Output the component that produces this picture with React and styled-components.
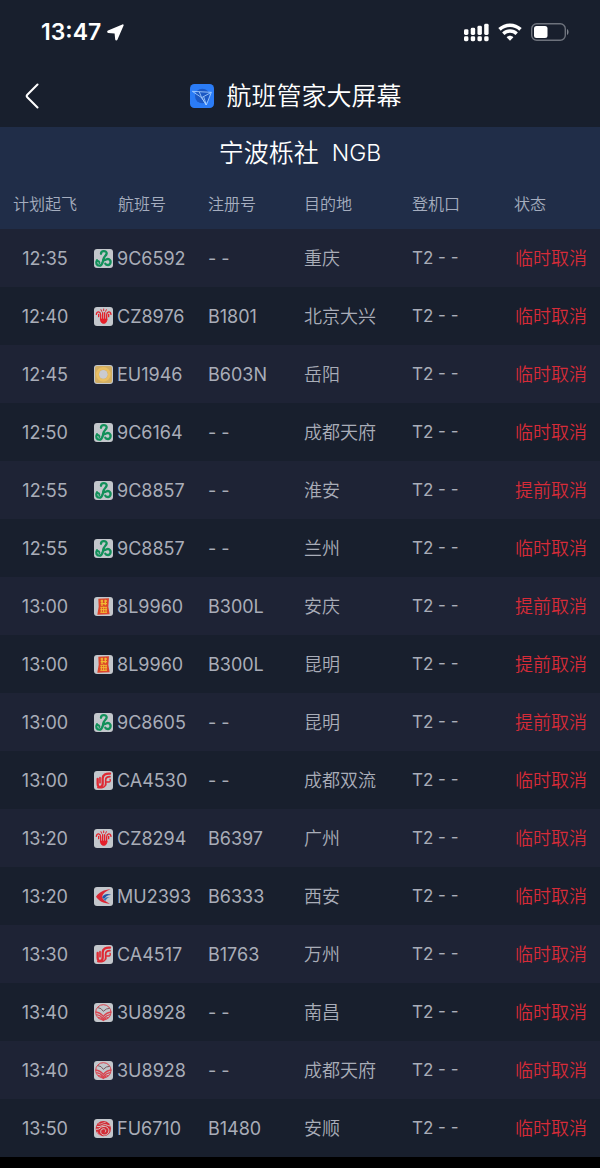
import styled, { createGlobalStyle } from "styled-components";

const GlobalStyle = createGlobalStyle`
  * {
    box-sizing: border-box;
  }
  body {
    margin: 0;
    background-color: #000;
    color: #fff;
    font-family: Inter, "Noto Sans CJK SC", sans-serif;
  }
`;

const Screen = styled.main`
  width: 100%;
  background-color: #181f2d;
`;

const StatusBar = styled.div`
  height: 64px;
  padding: 0 31px 0 41px;
  display: flex;
  align-items: center;
  justify-content: space-between;
`;

const Clock = styled.div`
  display: flex;
  align-items: center;
  gap: 6px;
  font-size: 23px;
  font-weight: 600;
  line-height: 28px;
`;

const Indicators = styled.div`
  display: flex;
  align-items: center;
  gap: 9px;
`;

const NavBar = styled.header`
  height: 63px;
  padding: 0 16px;
  display: grid;
  grid-template-columns: 32px 1fr 32px;
  align-items: center;
`;

const BackButton = styled.button`
  height: 40px;
  padding: 0;
  border: none;
  background: none;
  color: #fff;
  display: flex;
  align-items: center;
  justify-content: center;
  cursor: pointer;
`;

const Title = styled.h1`
  margin: 0;
  display: flex;
  align-items: center;
  justify-content: center;
  gap: 12px;
  font-size: 25px;
  font-weight: 350;
  line-height: 32px;
  padding-right: 8px;
`;

const Airport = styled.h2`
  margin: 0;
  height: 51px;
  background-color: #202d48;
  display: flex;
  align-items: center;
  justify-content: center;
  gap: 13px;
  font-size: 25px;
  font-weight: 350;
  line-height: 32px;

  span {
    font-size: 23px;
  }
`;

const Table = styled.table`
  width: 100%;
  table-layout: fixed;
  border-collapse: collapse;
  color: #a9adb8;

  th,
  td {
    padding: 0 0 0 4px;
    text-align: left;
    font-weight: 400;
    white-space: nowrap;
  }
  th {
    height: 51px;
    padding-bottom: 2px;
    font-size: 16px;
    font-weight: 350;
    background-color: #202d48;
    color: #a5adbf;
  }
  th:first-child,
  td:first-child {
    padding-left: 0;
    text-align: center;
  }
  th:nth-child(2) {
    padding-left: 28px;
  }
  td {
    height: 58px;
    font-size: 18px;
  }
  tbody tr:nth-child(odd) {
    background-color: #1e2335;
  }
`;

const Col = styled.col`
  width: ${(props) => props.$width};
`;

const Flight = styled.div`
  display: flex;
  align-items: center;
  gap: 4px;
`;

const Badge = styled.svg`
  width: 19px;
  height: 19px;
  border-radius: 3px;
  background-color: #c3c7cc;
  flex: none;
`;

const Destination = styled.td`
  && {
    font-weight: 350;
    padding-bottom: 2px;
  }
`;

const Gate = styled.td`
  && {
    font-size: 17px;
  }
`;

const State = styled.td`
  && {
    font-weight: 350;
    padding-bottom: 2px;
    padding-left: 5px;
    color: #d62b38;
  }
`;

const logos = {
  "9C": (
    <g fill="none" stroke="#12905a" strokeWidth="7" strokeLinecap="round">
      <path d="M21 14C21 4 38 4 38 13 38 21 27 22 29 32" />
      <path d="M9 34C4 42 8 50 16 50 26 50 25 39 29 31" />
      <path d="M29 32C35 36 38 27 45 31 53 36 50 48 42 48 38 48 35 46 34 44" />
      <path d="M9 36c5-1 8 2 7 6" strokeWidth="6" />
    </g>
  ),
  CZ: (
    <g fill="none" stroke="#e5202a" strokeLinecap="round">
      <path d="M20 38V24C20 14 9 10 7 22M38 38V24C38 14 49 10 51 22" strokeWidth="4" />
      <path d="M14 22v7M44 22v7M26 17v22M32 17v22" strokeWidth="4" />
      <path d="M21 8l2 5M29 6v5M37 8l-2 5" strokeWidth="3" />
      <path d="M19 36h20c1 18-21 18-20 0z" fill="#e5202a" strokeWidth="2" />
    </g>
  ),
  EU: (
    <g>
      <rect x="3" y="3" width="51" height="51" rx="6" fill="#d2ae64" />
      <circle cx="28" cy="28" r="18" fill="none" stroke="#eabf62" strokeWidth="8" />
      <circle cx="28" cy="28" r="13" fill="#cacbd0" />
    </g>
  ),
  "8L": (
    <g>
      <path d="M13 5l32-1-2 25 4 23-37 1 4-24z" fill="#dc442b" />
      <g fill="none" stroke="#f1bb32" strokeWidth="4">
        <path d="M20 12h7M31 12h8M20 20h19M24 8v19M34 8v17" />
        <path d="M19 31h20M19 38h20M19 46h20M22 31v15M29 29v19M36 31v15" strokeWidth="3" />
      </g>
    </g>
  ),
  CA: (
    <g fill="none" stroke="#df2933" strokeLinecap="round">
      <path d="M11 24v15c0 13 15 10 15-1V22C26 11 36 7 48 8" strokeWidth="7" />
      <path d="M18 20v15M35 42V27c0-8 4-10 13-10" strokeWidth="5" />
      <path d="M37 33h7c5 0 6-6 4-8" strokeWidth="4" />
      <path d="M11 50c12 2 24-1 24-12" strokeWidth="4" />
    </g>
  ),
  MU: (
    <g>
      <path d="M50 7C30 8 15 16 6 29c9 12 21 20 42 21-14-6-22-13-24-20C26 20 35 13 50 7z" fill="#dc2735" />
      <path d="M24 31c7-10 16-12 28-7-11-1-16 4-22 12z" fill="#2553a5" />
      <path d="M29 38c5-8 11-9 19-8-8 2-10 6-14 12z" fill="#377bba" />
    </g>
  ),
  "3U": (
    <g fill="none" stroke="#d9434e" strokeWidth="3">
      <circle cx="28" cy="28" r="23" />
      <path d="M12 14l9 3 7 8 9-7 10-2" stroke="#77585e" strokeWidth="3" />
      <path d="M5 27c11 1 17 6 23 13 6-7 13-12 24-13M7 35c10 1 15 5 21 12 6-7 11-11 21-12M12 43c8 1 11 3 16 9 5-6 8-8 16-9" strokeWidth="4" />
    </g>
  ),
  FU: (
    <g>
      <circle cx="28" cy="29" r="23" fill="#d22c36" />
      <g fill="none" stroke="#d5c8c8" strokeWidth="3" strokeLinecap="round">
        <path d="M9 22c9 5 18-7 26-5 9 3 11 5 17 3" />
        <path d="M7 31c12 2 11-9 23-9 15 0 20 17 8 24-10 6-21-2-17-12 5-10 19-3 13 5" />
        <path d="M14 15c9 2 12-5 20-5M10 39c2 8 7 10 11 11" strokeWidth="2" />
      </g>
    </g>
  ),
};

const flights = [
  ["12:35", "9C6592", "- -", "重庆", "临时取消"],
  ["12:40", "CZ8976", "B1801", "北京大兴", "临时取消"],
  ["12:45", "EU1946", "B603N", "岳阳", "临时取消"],
  ["12:50", "9C6164", "- -", "成都天府", "临时取消"],
  ["12:55", "9C8857", "- -", "淮安", "提前取消"],
  ["12:55", "9C8857", "- -", "兰州", "临时取消"],
  ["13:00", "8L9960", "B300L", "安庆", "提前取消"],
  ["13:00", "8L9960", "B300L", "昆明", "提前取消"],
  ["13:00", "9C8605", "- -", "昆明", "提前取消"],
  ["13:00", "CA4530", "- -", "成都双流", "临时取消"],
  ["13:20", "CZ8294", "B6397", "广州", "临时取消"],
  ["13:20", "MU2393", "B6333", "西安", "临时取消"],
  ["13:30", "CA4517", "B1763", "万州", "临时取消"],
  ["13:40", "3U8928", "- -", "南昌", "临时取消"],
  ["13:40", "3U8928", "- -", "成都天府", "临时取消"],
  ["13:50", "FU6710", "B1480", "安顺", "临时取消"],
];

const widths = ["15%", "19%", "16%", "18%", "17%", "15%"];
const headings = ["计划起飞", "航班号", "注册号", "目的地", "登机口", "状态"];

const SignalIcon = () => (
  <svg width="25" height="19" viewBox="0 0 26 19" fill="#fff">
    <rect x="0" y="6" width="4.6" height="6" rx="1.5" />
    <rect x="7" y="4.5" width="4.6" height="7.5" rx="1.5" />
    <rect x="14" y="2.5" width="4.6" height="9.5" rx="1.5" />
    <rect x="21" y="0.5" width="4.6" height="11.5" rx="1.5" />
    {[0, 7, 14, 21].map((x) => (
      <rect key={x} x={x} y="13.5" width="4.6" height="5" rx="1.5" />
    ))}
  </svg>
);

const WifiIcon = () => (
  <svg width="24" height="18" viewBox="0 0 24 18" fill="none" stroke="#fff">
    <path d="M1.5 6.4C7.5 .8 16.5 .8 22.5 6.4" strokeWidth="3.6" />
    <path d="M5.3 10.7c3.8-3.6 9.6-3.6 13.4 0" strokeWidth="3.4" />
    <path d="M8.6 14.2c2-2 4.8-2 6.8 0L12 17.8z" fill="#fff" stroke="none" />
  </svg>
);

const BatteryIcon = () => (
  <svg width="38" height="18" viewBox="0 0 38 18">
    <rect x="0.7" y="0.7" width="33.6" height="16.6" rx="5" fill="none" stroke="#6d727c" strokeWidth="1.4" />
    <rect x="3" y="3" width="13.5" height="12" rx="2.5" fill="#fff" />
    <path d="M36 6c2 .8 2 5.2 0 6z" fill="#7d828b" />
  </svg>
);

const AppIcon = () => (
  <svg width="24" height="24" viewBox="0 0 72 72">
    <rect width="72" height="72" rx="13" fill="#2b7cf6" />
    <circle cx="37" cy="36" r="22" fill="#1b58c4" />
    <g fill="none" stroke="#a8d0ff" strokeWidth="2.5" strokeLinejoin="round">
      <path d="M7 22l57 3-15 38-14-22z" />
      <path d="M35 41l29-16M28 24l7 17 14 22-8-25" />
    </g>
  </svg>
);

const LocationIcon = () => (
  <svg width="17" height="17" viewBox="0 0 17 17" fill="#fff">
    <path d="M15.4 .4L1 6.4C-.2 7-.1 8.7 1.2 9L7.6 9.6 8.2 15.4C8.4 16.8 9.9 16.9 10.4 15.7L16.6 1.5C16.9 .7 16.2 .1 15.4 .4z" />
  </svg>
);

const App = () => {
  return (
    <Screen>
      <GlobalStyle />
      <StatusBar>
        <Clock>
          13:47
          <LocationIcon />
        </Clock>
        <Indicators>
          <SignalIcon />
          <WifiIcon />
          <BatteryIcon />
        </Indicators>
      </StatusBar>
      <NavBar>
        <BackButton aria-label="返回">
          <svg width="14" height="26" viewBox="0 0 14 26" fill="none" stroke="#fff" strokeWidth="2" strokeLinecap="round">
            <path d="M12.5 1.5L2.3 11.8q-1.2 1.2 0 2.4L12.5 24.5" />
          </svg>
        </BackButton>
        <Title>
          <AppIcon />
          航班管家大屏幕
        </Title>
      </NavBar>
      <Airport>
        宁波栎社 <span>NGB</span>
      </Airport>
      <Table>
        <colgroup>
          {widths.map((w, i) => (
            <Col key={i} $width={w} />
          ))}
        </colgroup>
        <thead>
          <tr>
            {headings.map((h) => (
              <th key={h} scope="col">
                {h}
              </th>
            ))}
          </tr>
        </thead>
        <tbody>
          {flights.map(([time, number, reg, city, state], i) => (
            <tr key={i}>
              <td>{time}</td>
              <td>
                <Flight>
                  <Badge viewBox="0 0 57 57">{logos[number.slice(0, 2)]}</Badge>
                  {number}
                </Flight>
              </td>
              <td>{reg}</td>
              <Destination>{city}</Destination>
              <Gate>T2 - -</Gate>
              <State>{state}</State>
            </tr>
          ))}
        </tbody>
      </Table>
    </Screen>
  );
};

export default App;
